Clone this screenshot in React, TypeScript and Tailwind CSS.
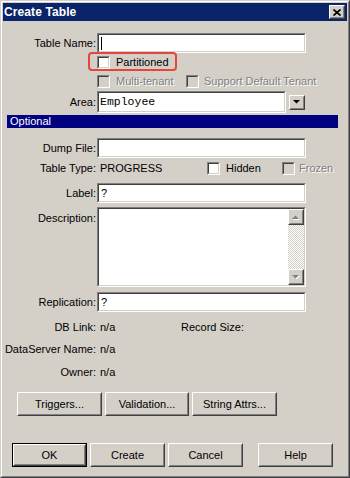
import type { ReactNode } from "react";

const FONT = "font-['Liberation_Sans',Arial,sans-serif]";
const DISABLED = "text-[#808080] [text-shadow:1px_1px_0_#ffffff]";

function Sunken({ className = "", children }: { className?: string; children?: ReactNode }) {
  return (
    <div className={`border border-t-[#808080] border-l-[#808080] border-r-white border-b-white ${className}`}>
      <div className="h-full border border-t-[#404040] border-l-[#404040] border-r-[#d4d0c8] border-b-[#d4d0c8] bg-white flex items-center overflow-hidden">
        {children}
      </div>
    </div>
  );
}

function Raised({ className = "", children }: { className?: string; children?: ReactNode }) {
  return (
    <div className={`border border-t-white border-l-white border-r-[#404040] border-b-[#404040] ${className}`}>
      <div className="h-full border border-t-[#d4d0c8] border-l-[#d4d0c8] border-r-[#808080] border-b-[#808080] bg-[#d4d0c8] flex items-center justify-center">
        {children}
      </div>
    </div>
  );
}

function Check({ disabled = false }: { disabled?: boolean }) {
  return (
    <div className="w-[13px] h-[13px] shrink-0 border border-t-[#808080] border-l-[#808080] border-r-white border-b-white">
      <div
        className={`h-full border border-t-[#404040] border-l-[#404040] border-r-[#d4d0c8] border-b-[#d4d0c8] ${
          disabled ? "bg-[#d4d0c8]" : "bg-white"
        }`}
      />
    </div>
  );
}

function Row({ label, children, className = "" }: { label: string; children?: ReactNode; className?: string }) {
  return (
    <div className={`flex items-center ${className}`}>
      <div className="w-[94px] shrink-0 pr-px text-right whitespace-nowrap">{label}</div>
      {children}
    </div>
  );
}

function Button({ label, width = "w-[85px]" }: { label: string; width?: string }) {
  return (
    <Raised className={`${width} h-[24px]`}>
      <span>{label}</span>
    </Raised>
  );
}

function Arrow({ dir, disabled = false }: { dir: "up" | "down"; disabled?: boolean }) {
  const pts = dir === "up" ? "0,4 7,4 3.5,0.5" : "0,0 7,0 3.5,3.5";
  return (
    <svg width="8" height="5" viewBox="0 0 8 5">
      {disabled && <polygon points={pts} fill="#ffffff" transform="translate(1,1)" />}
      <polygon points={pts} fill={disabled ? "#808080" : "#000000"} />
    </svg>
  );
}

export default function App() {
  return (
    <div className={`w-[350px] h-[478px] bg-[#d4d0c8] ${FONT} text-[11px] leading-none text-black select-none`}>
      <div className="h-full border border-t-[#d4d0c8] border-l-[#d4d0c8] border-r-[#404040] border-b-[#404040]">
        <div className="h-full border border-t-white border-l-white border-r-[#808080] border-b-[#808080] p-px flex flex-col">
          {/* title bar */}
          <div className="h-[18px] shrink-0 bg-[#0a246a] flex items-center justify-between pl-[1px] pr-[2px]">
            <span className="text-white font-bold text-[12px] tracking-[0.1px]">Create Table</span>
            <Raised className="w-[16px] h-[14px]">
              <svg width="8" height="7" viewBox="0 0 8 7">
                <path d="M0.5 0.5 L7.5 6.5 M7.5 0.5 L0.5 6.5" stroke="#000" strokeWidth="1.7" />
              </svg>
            </Raised>
          </div>

          {/* body */}
          <div className="flex flex-col">
            <Row label="Table Name:" className="mt-[12px]">
              <Sunken className="w-[209px] h-[20px]">
                <span className="ml-[2px] w-px h-[13px] bg-black" />
              </Sunken>
            </Row>

            <div className="relative mt-[3px] ml-[94px] flex items-center h-[13px]">
              <div className="absolute left-[-9px] top-[-4px] w-[89px] h-[19px] rounded-[4px] border-2 border-[#e2463c]" />
              <Check />
              <span className="ml-[6px]">Partitioned</span>
            </div>

            <div className="mt-[6px] ml-[94px] flex items-center h-[13px]">
              <div className="w-[89px] flex items-center">
                <Check disabled />
                <span className={`ml-[6px] ${DISABLED}`}>Multi-tenant</span>
              </div>
              <Check disabled />
              <span className={`ml-[5px] ${DISABLED}`}>Support Default Tenant</span>
            </div>

            <Row label="Area:" className="mt-[3px]">
              <Sunken className="w-[189px] h-[22px]">
                <span className="ml-[1px] font-['Liberation_Mono','Courier_New',monospace] text-[11.5px]">Employee</span>
              </Sunken>
              <Raised className="ml-[3px] w-[16px] h-[15px]">
                <Arrow dir="down" />
              </Raised>
            </Row>

            <div className="mt-[2px] ml-[4px] w-[331px] h-[13px] bg-[#000080] text-white flex items-center pl-[3px]">
              Optional
            </div>

            <Row label="Dump File:" className="mt-[10px]">
              <Sunken className="w-[209px] h-[20px]" />
            </Row>

            <Row label="Table Type:" className="mt-[4px] h-[13px]">
              <span className="ml-[3px] w-[107px]">PROGRESS</span>
              <div className="w-[75px] flex items-center">
                <Check />
                <span className="ml-[6px]">Hidden</span>
              </div>
              <Check disabled />
              <span className={`ml-[4px] ${DISABLED}`}>Frozen</span>
            </Row>

            <Row label="Label:" className="mt-[8px]">
              <Sunken className="w-[209px] h-[20px]">
                <span className="ml-[2px]">?</span>
              </Sunken>
            </Row>

            <div className="mt-[4px] flex items-start">
              <div className="w-[94px] shrink-0 pr-px text-right mt-[6px]">Description:</div>
              <Sunken className="w-[209px] h-[80px]">
                <div className="flex-1" />
                <div className="w-[16px] h-full flex flex-col bg-[repeating-conic-gradient(#d4d0c8_0%_25%,#ffffff_0%_50%)] bg-[length:2px_2px]">
                  <Raised className="w-[16px] h-[16px] shrink-0">
                    <Arrow dir="up" disabled />
                  </Raised>
                  <div className="flex-1" />
                  <Raised className="w-[16px] h-[16px] shrink-0">
                    <Arrow dir="down" disabled />
                  </Raised>
                </div>
              </Sunken>
            </div>

            <Row label="Replication:" className="mt-[5px]">
              <Sunken className="w-[209px] h-[20px]">
                <span className="ml-[2px]">?</span>
              </Sunken>
            </Row>

            <Row label="DB Link:" className="mt-[9px] h-[13px]">
              <span className="ml-[3px] w-[81px]">n/a</span>
              <span>Record Size:</span>
            </Row>

            <Row label="DataServer Name:" className="mt-[9px] h-[13px]">
              <span className="ml-[3px]">n/a</span>
            </Row>

            <Row label="Owner:" className="mt-[10px] h-[13px]">
              <span className="ml-[3px]">n/a</span>
            </Row>

            <div className="mt-[13px] ml-[14px] flex gap-[3px]">
              <Button label="Triggers..." />
              <Button label="Validation..." width="w-[84px]" />
              <Button label="String Attrs..." />
            </div>

            <div className="mt-[27px] ml-[9px] flex">
              <div className="w-[75px] h-[24px] border border-black">
                <Raised className="h-full">
                  <span>OK</span>
                </Raised>
              </div>
              <div className="ml-[3px]">
                <Button label="Create" width="w-[75px]" />
              </div>
              <div className="ml-[3px]">
                <Button label="Cancel" width="w-[75px]" />
              </div>
              <div className="ml-[15px]">
                <Button label="Help" width="w-[75px]" />
              </div>
            </div>
          </div>
        </div>
      </div>
    </div>
  );
}
